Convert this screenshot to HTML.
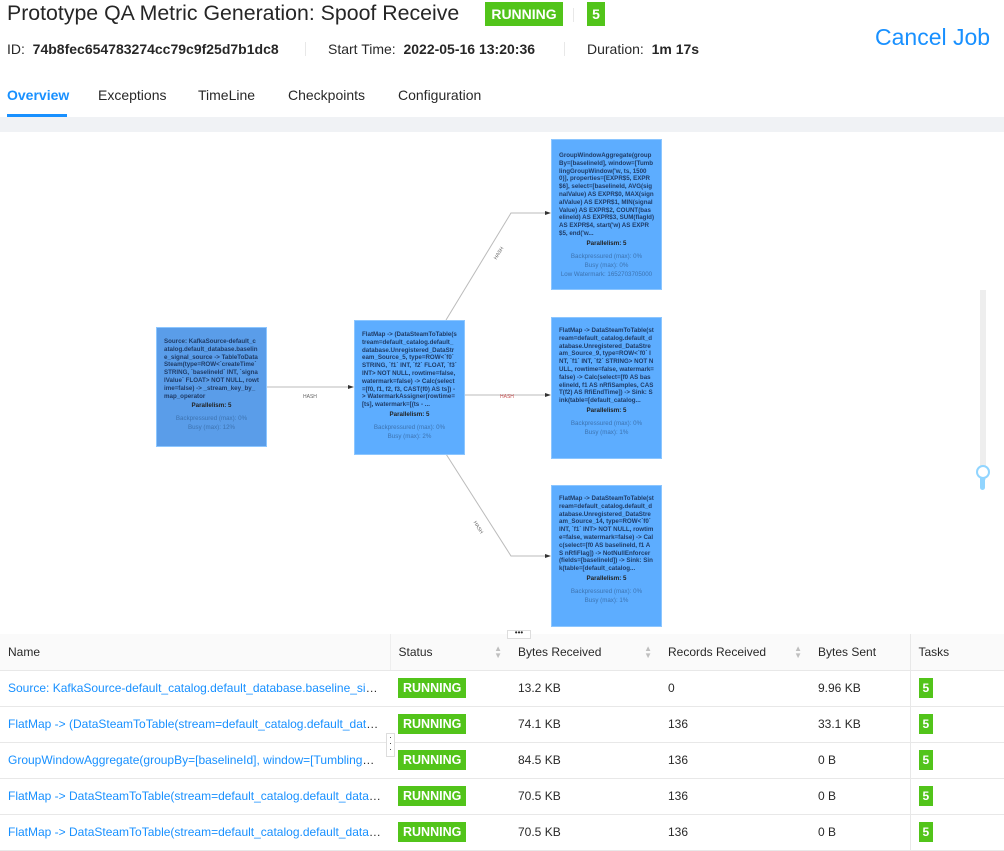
<!DOCTYPE html>
<html><head><meta charset="utf-8"><style>
*{box-sizing:border-box;margin:0;padding:0}
body{width:1004px;height:849px;overflow:hidden;background:#fff;font-family:"Liberation Sans",sans-serif;color:rgba(0,0,0,.85);position:relative;font-size:13px}
.abs{position:absolute}
.tag{background:#52c41a;color:#fff;font-weight:bold;display:inline-block}
.node{position:absolute;background:#5dadff;border:1px solid #8cc6ff;color:#1f3b66;font-size:6.2px;line-height:7.8px;padding:0 7px;overflow:hidden;word-break:break-all}
.node .t{font-weight:bold}
.node .p{font-weight:bold;text-align:center;color:#222;margin-top:2px}
.node .m{text-align:center;color:#3d73b0;margin-top:4px;line-height:9px}
table{border-collapse:collapse;position:absolute;left:0;top:634px;width:1004px;font-size:12px;table-layout:fixed}
td,th{height:36px;border-bottom:1px solid #e8e8e8;padding:0 8px;text-align:left;white-space:nowrap;overflow:hidden;text-overflow:ellipsis;vertical-align:middle}
th{background:#fafafa;font-weight:normal;color:rgba(0,0,0,.85)}
td a{color:#1890ff;text-decoration:none}
.rt{background:#52c41a;color:#fff;font-weight:bold;padding:3px 5px;font-size:12.5px}
.t5{background:#52c41a;color:#fff;font-weight:bold;padding:3px 4px}
.sort{float:right;color:#bfbfbf;font-size:8px;line-height:7px}
</style></head><body>
<div class="abs" style="left:7px;top:1px;font-size:21.3px;color:#262626">Prototype QA Metric Generation: Spoof Receive</div>
<div class="abs tag" style="left:485px;top:2px;height:24px;width:78px;font-size:14px;line-height:24px;text-align:center">RUNNING</div>
<div class="abs" style="left:573px;top:8px;width:1px;height:14px;background:#e8e8e8"></div>
<div class="abs tag" style="left:587px;top:2px;height:24px;width:18px;font-size:14px;line-height:24px;text-align:center">5</div>
<div class="abs" style="left:7px;top:41px;font-size:14px">ID:&nbsp; <b>74b8fec654783274cc79c9f25d7b1dc8</b></div>
<div class="abs" style="left:305px;top:42px;width:1px;height:14px;background:#e8e8e8"></div>
<div class="abs" style="left:328px;top:41px;font-size:14px">Start Time:&nbsp; <b>2022-05-16 13:20:36</b></div>
<div class="abs" style="left:564px;top:42px;width:1px;height:14px;background:#e8e8e8"></div>
<div class="abs" style="left:587px;top:41px;font-size:14px">Duration:&nbsp; <b>1m 17s</b></div>
<div class="abs" style="left:875px;top:24px;font-size:23px;color:#1890ff">Cancel Job</div>
<div class="abs" style="left:7px;top:87px;font-size:14px;color:#1890ff;font-weight:bold">Overview</div>
<div class="abs" style="left:7px;top:114px;width:60px;height:3px;background:#1890ff"></div>
<div class="abs" style="left:98px;top:87px;font-size:14px">Exceptions</div>
<div class="abs" style="left:198px;top:87px;font-size:14px">TimeLine</div>
<div class="abs" style="left:288px;top:87px;font-size:14px">Checkpoints</div>
<div class="abs" style="left:398px;top:87px;font-size:14px">Configuration</div>
<div class="abs" style="left:0;top:117px;width:1004px;height:15px;background:#f0f2f5"></div>

<svg class="abs" style="left:0;top:132px" width="1004" height="502">
<g stroke="#bbb" stroke-width="1" fill="none">
<line x1="266" y1="255" x2="352" y2="255"/>
<line x1="464" y1="263" x2="549" y2="263"/>
<polyline points="446,188 511,81 549,81"/>
<polyline points="446,322 511,424 549,424"/>
</g>
<g fill="#333"><path d="M354,255 l-6,-2 v4z"/><path d="M551,263 l-6,-2 v4z"/><path d="M551,81 l-6,-2 v4z"/><path d="M551,424 l-6,-2 v4z"/></g>
<g font-family="Liberation Sans" font-size="5" fill="#666">
<text x="303" y="266">HASH</text>
<text x="500" y="266" fill="#c55">HASH</text>
<text x="492" y="128" transform="rotate(-58 494 124)">HASH</text>
<text x="474" y="395" transform="rotate(58 478 392)">HASH</text>
</g>
<rect x="980" y="158" width="6" height="190" fill="#eee"/>
<rect x="980" y="338" width="5" height="20" rx="2.5" fill="#91d5ff"/>
<circle cx="983" cy="340" r="6" fill="#fff" stroke="#91d5ff" stroke-width="2"/>
</svg>

<div class="node" style="left:156px;top:327px;width:111px;height:120px;background:#5a9de9;padding-top:10px">
<div class="t">Source: KafkaSource-default_catalog.default_database.baseline_signal_source -&gt; TableToDataSteam(type=ROW&lt;`createTime` STRING, `baselineId` INT, `signalValue` FLOAT&gt; NOT NULL, rowtime=false) -&gt; _stream_key_by_map_operator</div>
<div class="p">Parallelism: 5</div><div class="m">Backpressured (max): 0%<br>Busy (max): 12%</div></div>
<div class="node" style="left:354px;top:320px;width:111px;height:135px;padding-top:10px">
<div class="t">FlatMap -&gt; (DataSteamToTable(stream=default_catalog.default_database.Unregistered_DataStream_Source_5, type=ROW&lt;`f0` STRING, `f1` INT, `f2` FLOAT, `f3` INT&gt; NOT NULL, rowtime=false, watermark=false) -&gt; Calc(select=[f0, f1, f2, f3, CAST(f0) AS ts]) -&gt; WatermarkAssigner(rowtime=[ts], watermark=[(ts - ...</div>
<div class="p">Parallelism: 5</div><div class="m">Backpressured (max): 0%<br>Busy (max): 2%</div></div>
<div class="node" style="left:551px;top:139px;width:111px;height:151px;padding-top:12px">
<div class="t">GroupWindowAggregate(groupBy=[baselineId], window=[TumblingGroupWindow('w, ts, 15000)], properties=[EXPR$5, EXPR$6], select=[baselineId, AVG(signalValue) AS EXPR$0, MAX(signalValue) AS EXPR$1, MIN(signalValue) AS EXPR$2, COUNT(baselineId) AS EXPR$3, SUM(flagId) AS EXPR$4, start('w) AS EXPR$5, end('w...</div>
<div class="p">Parallelism: 5</div><div class="m">Backpressured (max): 0%<br>Busy (max): 0%<br>Low Watermark: 1652703705000</div></div>
<div class="node" style="left:551px;top:317px;width:111px;height:142px;padding-top:9px">
<div class="t">FlatMap -&gt; DataSteamToTable(stream=default_catalog.default_database.Unregistered_DataStream_Source_9, type=ROW&lt;`f0` INT, `f1` INT, `f2` STRING&gt; NOT NULL, rowtime=false, watermark=false) -&gt; Calc(select=[f0 AS baselineId, f1 AS nRfiSamples, CAST(f2) AS RfiEndTime]) -&gt; Sink: Sink(table=[default_catalog...</div>
<div class="p">Parallelism: 5</div><div class="m">Backpressured (max): 0%<br>Busy (max): 1%</div></div>
<div class="node" style="left:551px;top:485px;width:111px;height:142px;padding-top:9px">
<div class="t">FlatMap -&gt; DataSteamToTable(stream=default_catalog.default_database.Unregistered_DataStream_Source_14, type=ROW&lt;`f0` INT, `f1` INT&gt; NOT NULL, rowtime=false, watermark=false) -&gt; Calc(select=[f0 AS baselineId, f1 AS nRfiFlag]) -&gt; NotNullEnforcer(fields=[baselineId]) -&gt; Sink: Sink(table=[default_catalog...</div>
<div class="p">Parallelism: 5</div><div class="m">Backpressured (max): 0%<br>Busy (max): 1%</div></div>

<table>
<colgroup><col style="width:390px"><col style="width:120px"><col style="width:150px"><col style="width:150px"><col style="width:100px"><col style="width:94px"></colgroup>
<tr><th>Name</th><th style="border-left:1px solid #eee">Status<span class="sort">▲<br>▼</span></th><th>Bytes Received<span class="sort">▲<br>▼</span></th><th>Records Received<span class="sort">▲<br>▼</span></th><th>Bytes Sent</th><th style="border-left:1px solid #e8e8e8;box-shadow:-3px 0 4px rgba(0,0,0,.06)">Tasks</th></tr>
<tr><td><a>Source: KafkaSource-default_catalog.default_database.baseline_signal_source</a></td><td><span class="rt">RUNNING</span></td><td>13.2 KB</td><td>0</td><td>9.96 KB</td><td style="border-left:1px solid #e8e8e8"><span class="t5">5</span></td></tr>
<tr><td><a>FlatMap -&gt; (DataSteamToTable(stream=default_catalog.default_database</a></td><td><span class="rt">RUNNING</span></td><td>74.1 KB</td><td>136</td><td>33.1 KB</td><td style="border-left:1px solid #e8e8e8"><span class="t5">5</span></td></tr>
<tr><td><a>GroupWindowAggregate(groupBy=[baselineId], window=[TumblingGroupWindow</a></td><td><span class="rt">RUNNING</span></td><td>84.5 KB</td><td>136</td><td>0 B</td><td style="border-left:1px solid #e8e8e8"><span class="t5">5</span></td></tr>
<tr><td><a>FlatMap -&gt; DataSteamToTable(stream=default_catalog.default_database</a></td><td><span class="rt">RUNNING</span></td><td>70.5 KB</td><td>136</td><td>0 B</td><td style="border-left:1px solid #e8e8e8"><span class="t5">5</span></td></tr>
<tr><td><a>FlatMap -&gt; DataSteamToTable(stream=default_catalog.default_database</a></td><td><span class="rt">RUNNING</span></td><td>70.5 KB</td><td>136</td><td>0 B</td><td style="border-left:1px solid #e8e8e8"><span class="t5">5</span></td></tr>
</table>
<div class="abs" style="left:507px;top:630px;width:24px;height:9px;background:#fff;border:1px solid #ddd;font-size:8px;line-height:4px;text-align:center">•••</div>
<div class="abs" style="left:386px;top:733px;width:9px;height:24px;background:#fff;border:1px solid #ddd;font-size:9px;line-height:6px;text-align:center">·<br>·<br>·</div>
</body></html>
